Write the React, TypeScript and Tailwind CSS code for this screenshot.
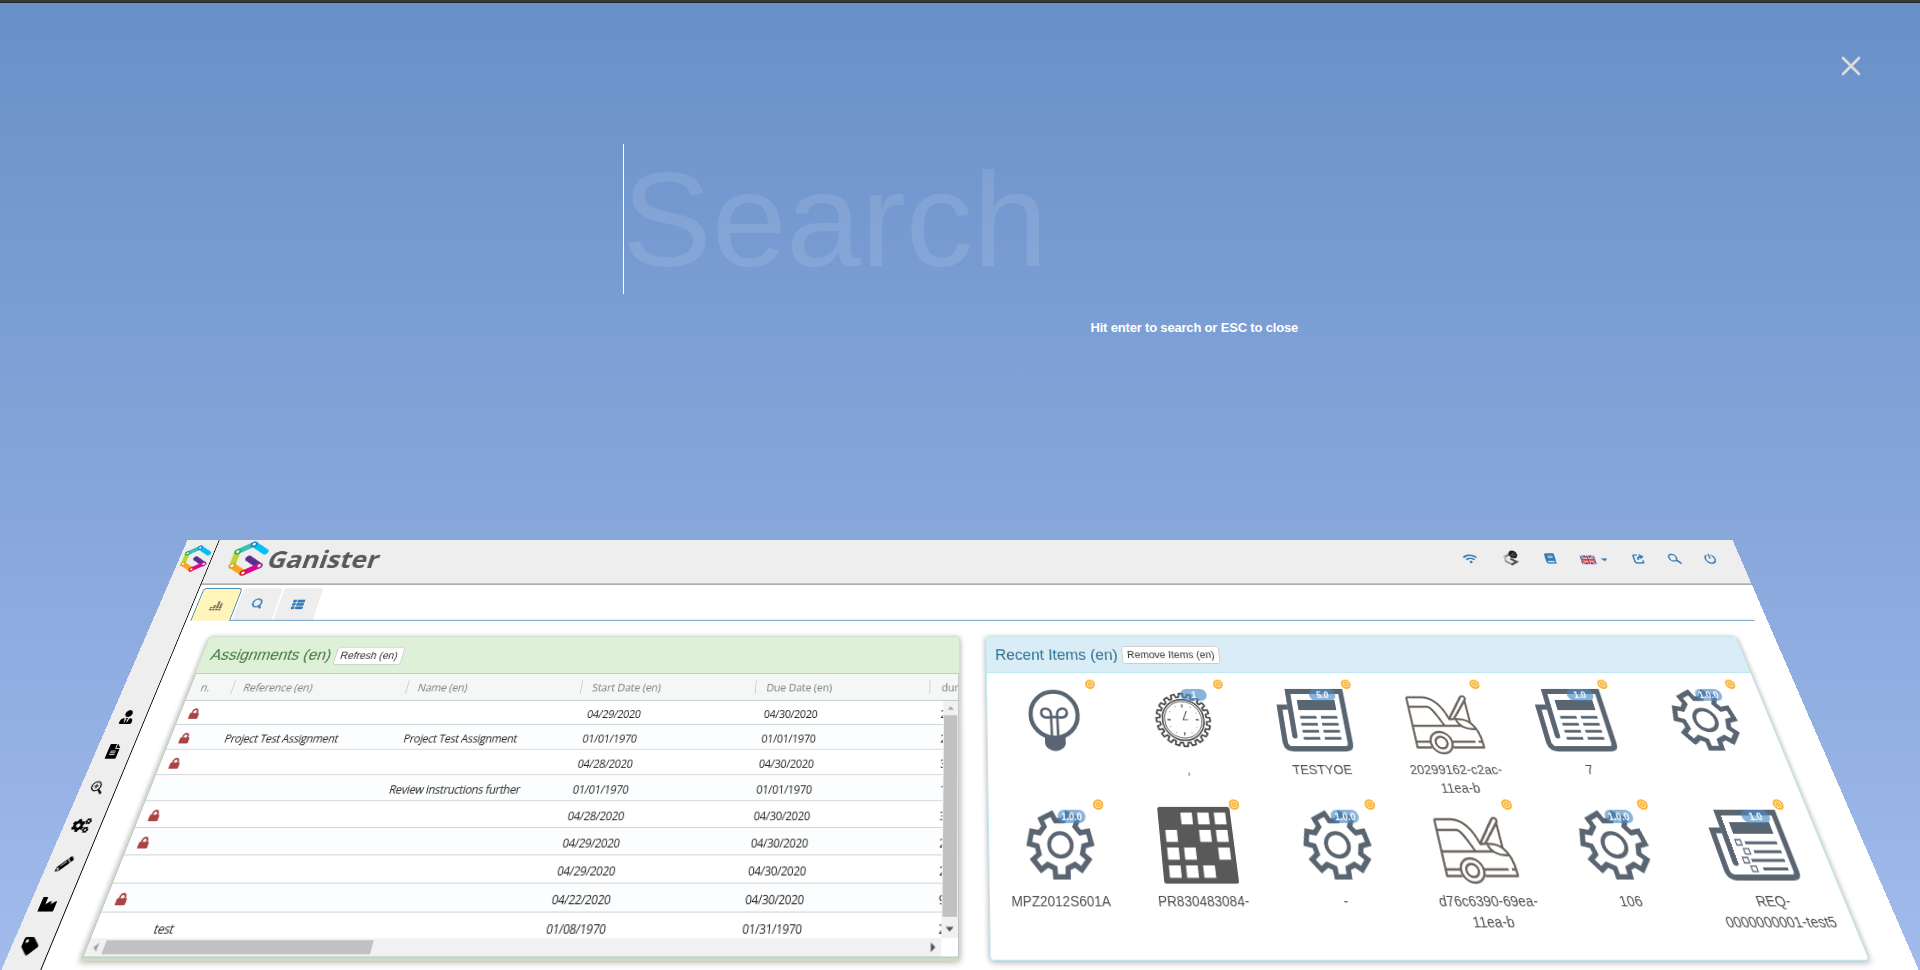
import React from "react";
import {
  FaWifi,
  FaBook,
  FaUserTie,
  FaFileAlt,
  FaCogs,
  FaPencilAlt,
  FaIndustry,
  FaTag,
  FaThList,
  FaLock,
} from "react-icons/fa";

function Logo({ className }: { className: string }) {
  const node = (x: number, y: number, c: string) => (
    <circle cx={x} cy={y} r="2.9" fill="#fff" stroke={c} strokeWidth="1.9" />
  );
  return (
    <svg viewBox="0 0 50 50" className={className} fill="none" strokeWidth="7.6" strokeLinecap="round">
      <path d="M25 5.5L42.3 15.8" stroke="#00bff3" />
      <path d="M25 5.5L8.3 15.8" stroke="#3bbfb0" />
      <path d="M8.3 15.8V35" stroke="#bcd631" />
      <path d="M8.3 35L25 44.5" stroke="#faa61a" />
      <path d="M41.5 35L25 25" stroke="#5c2d91" />
      <path d="M25 44.5L41.5 35" stroke="#e0058c" />
      {node(25, 5.5, "#0f7fc4")}
      {node(8.3, 15.8, "#12a65a")}
      {node(8.3, 35, "#d9a021")}
      {node(25, 44.5, "#d71920")}
      {node(41.5, 35, "#a8288e")}
    </svg>
  );
}

function GreyLogo() {
  return (
    <svg viewBox="0 0 22 22" className="h-[22px] w-[22px]" fill="none" strokeLinecap="round">
      <path d="M10 5.500L3.500 9" stroke="#8a8a8a" strokeWidth="2.800" />
      <path d="M3.500 9V15" stroke="#bbb" strokeWidth="2.800" />
      <path d="M3.500 15L10 19" stroke="#999" strokeWidth="2.800" />
      <path d="M10 19L16.500 15.500L10.500 12" stroke="#555" strokeWidth="2.800" />
      <circle cx="14.500" cy="5.500" r="5.200" fill="#1c1c1c" />
      <path d="M11.500 6.500l5-2.800M13.500 8l4-2.200" stroke="#8a8a8a" strokeWidth="0.900" />
    </svg>
  );
}

function Flag() {
  return (
    <svg viewBox="0 0 18 12" className="h-3 w-[18px]">
      <rect width="18" height="12" fill="#3d4d94" />
      <path d="M0 0L18 12M18 0L0 12" stroke="#e8e4f0" strokeWidth="2" />
      <path d="M0 0L18 12M18 0L0 12" stroke="#d8404a" strokeWidth="0.9" />
      <path d="M9 0V12M0 6H18" stroke="#f0e8f0" strokeWidth="3.400" />
      <path d="M9 0V12M0 6H18" stroke="#e03a3a" strokeWidth="2" />
    </svg>
  );
}

function gearPath(cx: number, cy: number, n: number, ro: number, ri: number, a: number, b: number) {
  let d = "";
  for (let i = 0; i < n; i++) {
    const t = Math.PI / 2 + (i * 2 * Math.PI) / n;
    const pts: [number, number][] = [
      [ri, t - b],
      [ro, t - a],
      [ro, t + a],
      [ri, t + b],
    ];
    pts.forEach(([r, ang], k) => {
      d += `${i === 0 && k === 0 ? "M" : "L"}${(cx + r * Math.cos(ang)).toFixed(2)} ${(cy + r * Math.sin(ang)).toFixed(2)}`;
    });
  }
  return d + "Z";
}

const GEAR = gearPath(41.6, 40, 7, 33, 24.8, 0.2, 0.28);
const COG = gearPath(40, 40, 20, 30.3, 26.3, 0.07, 0.1);

function Gear() {
  return (
    <svg viewBox="0 0 80 80" className="h-20 w-20 shrink-0" fill="none" stroke="#5a6572">
      <path d={GEAR} strokeWidth="5.4" />
      <circle cx="41.6" cy="40.3" r="12" strokeWidth="4" />
    </svg>
  );
}

function Bulb() {
  return (
    <svg viewBox="0 0 80 80" className="h-20 w-20 shrink-0" fill="none" stroke="#5a6572">
      <circle cx="41.5" cy="34" r="26.6" strokeWidth="4.8" />
      <path
        d="M38 60V33C38 26 27 25 27 32C27 38 33 38 38 37H45C50 38 56 38 56 32C56 25 45 26 45 33V60"
        strokeWidth="2.8"
      />
      <path d="M30 59C36 61.500 47 61.500 53 59V67C53 71 47 75.500 41.500 75.500C36 75.500 30 71 30 67Z" fill="#5a6572" stroke="none" />
    </svg>
  );
}

function ClockGear() {
  return (
    <svg viewBox="0 0 80 80" className="h-20 w-20 shrink-0" fill="none" stroke="#4d4d4d">
      <path d={COG} strokeWidth="2" strokeLinejoin="round" />
      <circle cx="40" cy="40" r="23.4" strokeWidth="1.7" />
      <circle cx="40" cy="40" r="21" strokeWidth="1" />
      <circle cx="40" cy="40" r="17" strokeWidth="1.300" strokeDasharray="0.800 8.100" />
      <path d="M40 22.500v3.500M40 54v3.500M22.500 40h3.500M54 40h3.500" strokeWidth="1.300" />
      <path d="M44.500 30L40 40h5.500" strokeWidth="1.100" />
    </svg>
  );
}

function News({ list = false }: { list?: boolean }) {
  return (
    <svg viewBox="0 0 80 80" className="h-20 w-20 shrink-0" fill="none" stroke="#5a6572">
      <path d="M16 58V7H76.500V67Q76.500 73 70.500 73H12Q4 73 4 65V25.500H13" strokeWidth="5.8" />
      <circle cx="16" cy="58.500" r="2.900" fill="#5a6572" stroke="none" />
      <rect x="25" y="17" width="43" height="12" fill="#5a6572" stroke="none" />
      {list ? (
        <g>
          <path d="M34 38.200H68M40 47.200H69M34 56H69M43 64.500H69" strokeWidth="3" />
          <path d="M24.500 35h5.500v5.500h-5.500zM30 44.200h5.500v5.500h-5.500zM25.500 53h5.500v5.500h-5.500zM31 61.700h5.500v5.500h-5.500z" strokeWidth="1.3" />
        </g>
      ) : (
        <path d="M25.500 37.300H44M49 37.300H67.500M25.500 45.300H44M49 45.300H67.500M25.500 53.300H44M49 53.300H67.500M25.500 61.300H44M49 61.300H67.500" strokeWidth="2.9" />
      )}
    </svg>
  );
}

function Car() {
  return (
    <svg viewBox="0 0 80 80" className="h-20 w-20 shrink-0" fill="none" stroke="#6b655e" strokeWidth="2.400" strokeLinejoin="round">
      <path d="M3.500 14H22C34 15 42 25 46.500 39.500C56 38.500 64 39.500 69 43.500C75 49 78 60 77.500 71.500H43.500" />
      <path d="M3.500 14V71.500H19.500M3.500 25H25C30 26 35 38 39.500 47M3.500 47H58M4 65H19.500M43.500 65H69.500M73 65H77" />
      <circle cx="31.500" cy="66" r="12" />
      <circle cx="31.500" cy="66" r="6.500" />
      <path d="M46.500 39L64.500 14.500C67 11 71.500 13 69.500 17L52 38.800M69 18.500L69 43" />
      <path d="M54 40C55 47 64 52 74 50.500" />
    </svg>
  );
}

function Board() {
  const cells = [
    [1, 0], [2, 0], [3, 0],
    [0, 1], [2, 1], [3, 1],
    [0, 2], [1, 2], [3, 2],
    [0, 3], [1, 3], [2, 3],
  ];
  return (
    <svg viewBox="0 0 80 80" className="h-20 w-20 shrink-0">
      <rect x="1" y="1" width="78" height="78" rx="2.500" fill="#595959" />
      {cells.map(([c, r]) => (
        <rect key={`${c}${r}`} x={7.5 + c * 18} y={7 + r * 18} width="12.300" height="12.300" fill="#fff" />
      ))}
    </svg>
  );
}

type Item = { icon: React.ReactNode; version?: string; label: string };

const ITEMS: Item[] = [
  { icon: <Bulb />, label: "" },
  { icon: <ClockGear />, version: "1", label: "," },
  { icon: <News />, version: "5.0", label: "TESTYOE" },
  { icon: <Car />, label: "20299162-c2ac-11ea-b" },
  { icon: <News />, version: "1.0", label: "7" },
  { icon: <Gear />, version: "1.0.0", label: "" },
  { icon: <Gear />, version: "1.0.0", label: "MPZ2012S601A" },
  { icon: <Board />, label: "PR830483084-" },
  { icon: <Gear />, version: "1.0.0", label: "-" },
  { icon: <Car />, label: "d76c6390-69ea-11ea-b" },
  { icon: <Gear />, version: "1.0.0", label: "106" },
  { icon: <News list />, version: "1.0", label: "REQ-0000000001-test5" },
];

function RecentItem({ icon, version, label }: Item) {
  return (
    <div className="relative flex h-[135px] flex-col items-center px-[15px] pt-[15px]">
      {icon}
      <div className="mt-[6px] text-center text-sm leading-5 text-[#4f4f4f]">{label}</div>
      {version && (
        <span className="absolute top-[19px] left-[74px] flex h-[14px] w-[30px] items-center justify-center rounded-full bg-[#4a8ac4]/65 text-[10px] font-bold text-white">
          {version}
        </span>
      )}
      <svg viewBox="0 0 12 12" className="absolute top-[8px] left-[113px] h-[11px] w-[11px]">
        <circle cx="6" cy="6" r="6" fill="#fbae28" />
        <circle cx="6" cy="6" r="3.500" fill="none" stroke="#fff" strokeWidth="0.900" />
        <path d="M4.700 4.700l2.600 2.600M7.300 4.700l-2.600 2.600" stroke="#fff" strokeWidth="0.800" />
      </svg>
    </div>
  );
}

type Row = { lock?: boolean; ref?: string; name?: string; start: string; due: string; dur: string };

const ROWS: Row[] = [
  { lock: true, start: "04/29/2020", due: "04/30/2020", dur: "2" },
  { lock: true, ref: "Project Test Assignment", name: "Project Test Assignment", start: "01/01/1970", due: "01/01/1970", dur: "2" },
  { lock: true, start: "04/28/2020", due: "04/30/2020", dur: "3" },
  { name: "Review instructions further", start: "01/01/1970", due: "01/01/1970", dur: "1" },
  { lock: true, start: "04/28/2020", due: "04/30/2020", dur: "3" },
  { lock: true, start: "04/29/2020", due: "04/30/2020", dur: "2" },
  { start: "04/29/2020", due: "04/30/2020", dur: "2" },
  { lock: true, start: "04/22/2020", due: "04/30/2020", dur: "9" },
  { ref: "test", start: "01/08/1970", due: "01/31/1970", dur: "2" },
];

const COLS = "grid grid-cols-[49px_200px_200px_200px_200px_100px]";

function HeadCell({ children, last = false }: { children: React.ReactNode; last?: boolean }) {
  return (
    <div className="flex items-center justify-between pl-[12px]">
      <span className="pt-[2px]">{children}</span>
      {!last && <span className="h-4 w-px bg-[#c9cdd0]" />}
    </div>
  );
}

function Assignments() {
  return (
    <section className="h-[347px] w-[885px] shrink-0 overflow-hidden rounded-[4px] border border-[#cfdfc4] bg-[#cbdcc6] shadow-[0_1px_6px_rgba(0,0,0,0.35)]">
      <div className="flex h-[44px] items-center gap-[5px] bg-[#dff0d8] pl-[10px]">
        <h3 className="text-[18px] leading-5 text-[#3c763d]">Assignments (en)</h3>
        <button className="mt-px h-[22px] rounded-[3px] border border-[#ccc] bg-white px-[5px] text-xs leading-[18px] text-[#333]">
          Refresh (en)
        </button>
      </div>
      <div className="h-[299px] overflow-hidden border border-[#bdc3c7] bg-white font-['Open_Sans',sans-serif] text-[12px] tracking-[-0.32px]">
        <div className={`${COLS} h-8 border-b border-[#bdc3c7] bg-[#f5f7f7] tracking-[-0.12px] text-[#7a7d7d]`}>
          <HeadCell>n.</HeadCell>
          <HeadCell>Reference (en)</HeadCell>
          <HeadCell>Name (en)</HeadCell>
          <HeadCell>Start Date (en)</HeadCell>
          <HeadCell>Due Date (en)</HeadCell>
          <HeadCell last>
            <span className="pl-px">dur</span>
          </HeadCell>
        </div>
        <div className="flex h-[248px]">
          <div className="flex-1 overflow-hidden">
            {ROWS.map((r, i) => (
              <div
                key={i}
                className={`${COLS} h-7 items-center border-b border-[#d0d5d8] text-[#222] *:pl-[12px] *:whitespace-nowrap ${i % 2 ? "bg-[#fcfdfe]" : "bg-white"}`}
              >
                <span>{r.lock && <FaLock className="mt-[2px] -ml-[2px] h-3 w-3 text-[#a94442]" />}</span>
                <span className="pt-[5px]">{r.ref}</span>
                <span className="pt-[5px]">{r.name}</span>
                <span className="pt-[5px]">{r.start}</span>
                <span className="pt-[5px]">{r.due}</span>
                <span className="pt-[5px]">{r.dur}</span>
              </div>
            ))}
          </div>
          <div className="flex w-[17px] flex-col items-center bg-[#f1f1f1]">
            <svg viewBox="0 0 17 17" className="h-[17px] w-[17px]"><path d="M5 10.500L8.500 6.500L12 10.500Z" fill="#a3a3a3" /></svg>
            <div className="h-[211px] w-[15px] bg-[#c1c1c1]" />
            <svg viewBox="0 0 17 17" className="mt-auto h-[17px] w-[17px]"><path d="M4.500 6.500L8.500 11L12.500 6.500Z" fill="#505050" /></svg>
          </div>
        </div>
        <div className="flex h-[17px]">
          <div className="flex flex-1 items-center bg-[#f1f1f1]">
            <svg viewBox="0 0 17 17" className="h-[17px] w-[17px]"><path d="M10.500 4.500L6 8.500L10.500 12.500Z" fill="#a3a3a3" /></svg>
            <div className="h-[13px] w-[271px] bg-[#c1c1c1]" />
            <svg viewBox="0 0 17 17" className="ml-auto h-[17px] w-[17px]"><path d="M6.500 4L11 8.500L6.500 13Z" fill="#505050" /></svg>
          </div>
          <div className="w-[17px] bg-white" />
        </div>
      </div>
    </section>
  );
}

function RecentItems() {
  return (
    <section className="h-[347px] w-[885px] shrink-0 overflow-hidden rounded-[4px] border border-[#bce8f1] bg-white shadow-[0_1px_6px_rgba(0,0,0,0.35)]">
      <div className="flex h-[44px] items-center gap-[5px] border-b border-[#bce8f1] bg-[#d9edf7] pl-[10px]">
        <h3 className="text-[18px] leading-5 text-[#31708f]">Recent Items (en)</h3>
        <button className="mt-px h-[22px] rounded-[3px] border border-[#ccc] bg-white px-[5px] text-xs leading-[18px] text-[#333]">
          Remove Items (en)
        </button>
      </div>
      <div className="grid grid-cols-6">
        {ITEMS.map((it, i) => (
          <RecentItem key={i} {...it} />
        ))}
      </div>
    </section>
  );
}

function Sidebar() {
  const cell = "flex h-[39.5px] items-center justify-center pr-[2px]";
  return (
    <aside className="w-[40px] shrink-0 border-r border-black bg-[#eee]">
      <div className="flex h-[204px] justify-center pt-[6px]">
        <Logo className="h-[38px] w-[38px]" />
      </div>
      <div className={cell}><FaUserTie size={16} /></div>
      <div className={cell}><FaFileAlt size={16} /></div>
      <div className={cell}>
        <svg viewBox="0 0 15 15" className="h-[15px] w-[15px]" fill="none" stroke="#000">
          <circle cx="6" cy="6" r="4.800" strokeWidth="1.300" />
          <path d="M6 3.500V8.500M3.500 6H8.500" strokeWidth="1" />
          <path d="M9.800 9.800L14 14" strokeWidth="2.100" />
        </svg>
      </div>
      <div className={cell}><FaCogs size={19} /></div>
      <div className={cell}><FaPencilAlt size={15} /></div>
      <div className={cell}><FaIndustry size={16} /></div>
      <div className={cell}><FaTag size={17} /></div>
    </aside>
  );
}

function Header() {
  const slot = "flex w-[44px] justify-center";
  return (
    <header className="flex h-[60px] shrink-0 border-b border-[#3c4043] bg-[#eee] pl-[20px]">
      <Logo className="h-[50px] w-[50px]" />
      <span className="mt-[4px] font-['Open_Sans',sans-serif] text-[32px] leading-[44px] font-bold text-[#58595b]">Ganister</span>
      <nav className="mr-[16px] ml-auto flex h-[50px] items-center text-[#337ab7]">
        <span className="flex w-[50px] justify-center"><FaWifi size={17} /></span>
        <span className="flex w-[51px] justify-center"><GreyLogo /></span>
        <span className="flex w-[46px] justify-center"><FaBook size={14} /></span>
        <span className="ml-[14px] flex w-[49px] items-center gap-[7px] pt-[3px]">
          <Flag />
          <svg viewBox="0 0 8 4" className="h-1 w-2"><path d="M0 0H8L4 4Z" fill="currentColor" /></svg>
        </span>
        <span className={slot}>
          <svg viewBox="0 0 16 16" className="h-[15px] w-[15px]" fill="none" stroke="currentColor">
            <path d="M7.500 2.500H4Q2 2.500 2 4.500V12Q2 14 4 14H11Q13 14 13 12V10" strokeWidth="2" />
            <path d="M7 9.500C7 6.500 8.500 5.300 11 5" strokeWidth="2.200" />
            <path d="M10 0.800L15.500 4.500L10.500 8.800Z" fill="currentColor" stroke="none" />
          </svg>
        </span>
        <span className={slot}>
          <svg viewBox="0 0 16 16" className="h-[15px] w-[15px]" fill="none" stroke="currentColor">
            <circle cx="6.300" cy="6.300" r="4.900" strokeWidth="2" />
            <path d="M9.800 9.800L15 14.800" strokeWidth="2.600" />
          </svg>
        </span>
        <span className={slot}>
          <svg viewBox="0 0 16 16" className="h-[15px] w-[15px]" fill="none" stroke="currentColor" strokeWidth="1.900">
            <path d="M5 2.600A6.300 6.300 0 1 0 11 2.600M8 0.800V8" />
          </svg>
        </span>
      </nav>
    </header>
  );
}

function Tabs() {
  const heights = [2, 3, 5, 4];
  return (
    <div className="mt-[5px] mr-[15px] ml-[5px] flex h-[42px] shrink-0 items-end gap-[2px] border-b border-[#337ab7] text-[#337ab7]">
      <div className="-mb-px flex h-[42px] w-[47px] items-center justify-center rounded-t-[4px] border border-b-0 border-[#3a7ca8] bg-[#fff5ba] pt-[3px]">
        <svg viewBox="0 0 15 13" className="h-[12px] w-[14px]" fill="#3f3f33">
          {heights.flatMap((h, c) =>
            Array.from({ length: h }, (_, k) => (
              <rect key={`${c}-${k}`} x={c * 3.9} y={11 - k * 2.6} width="2.800" height="1.600" />
            ))
          )}
        </svg>
      </div>
      <div className="flex h-[41px] w-[47px] items-center justify-center rounded-t-[4px] bg-[#eee]">
        <svg viewBox="0 0 13 13" className="mr-px mb-[2px] h-[14px] w-[14px]" fill="none" stroke="currentColor">
          <circle cx="6" cy="5.800" r="4.700" strokeWidth="1.700" />
          <path d="M8 8.500L11.500 12.200" strokeWidth="2.200" />
        </svg>
      </div>
      <div className="flex h-[41px] w-[47px] items-center justify-center rounded-t-[4px] bg-[#eee] pr-[2px]">
        <FaThList size={14} />
      </div>
    </div>
  );
}

export default function App() {
  return (
    <div className="relative h-[970px] w-[1920px] overflow-hidden bg-linear-to-b from-[#6890c8] to-[#a2bbec] font-['Liberation_Sans',Arial,sans-serif]">
      <div className="h-[3px] border-b border-[#2a2622] bg-[#35383c]" />

      <div className="absolute inset-x-0 top-[3px] flex flex-col">
        <svg viewBox="0 0 20 20" className="mt-[53px] mr-[59px] h-5 w-5 self-end" fill="none" stroke="#ddd" strokeWidth="2.600" strokeLinecap="round">
          <path d="M2 2L18 18M18 2L2 18" />
        </svg>
        <div className="mx-auto mt-[68px] flex w-[674px] flex-col">
          <div className="flex h-[150px] items-center border-l border-white text-[134.4px] leading-[150px] text-white/10">
            <span className="-ml-[2px]">Search</span>
          </div>
          <span className="mt-[24px] -mr-px self-end text-[13px] leading-5 font-bold tracking-[-0.18px] text-white">
            Hit enter to search or ESC to close
          </span>
        </div>
      </div>

      <div className="flex h-[970px] w-[1920px] bg-white [transform:perspective(1000px)_translate3d(0,485px,0)_rotateX(30deg)]">
        <Sidebar />
        <div className="flex flex-1 flex-col">
          <Header />
          <Tabs />
          <main className="mt-[20px] flex gap-[30px] pl-[35px]">
            <Assignments />
            <RecentItems />
          </main>
        </div>
      </div>
    </div>
  );
}
